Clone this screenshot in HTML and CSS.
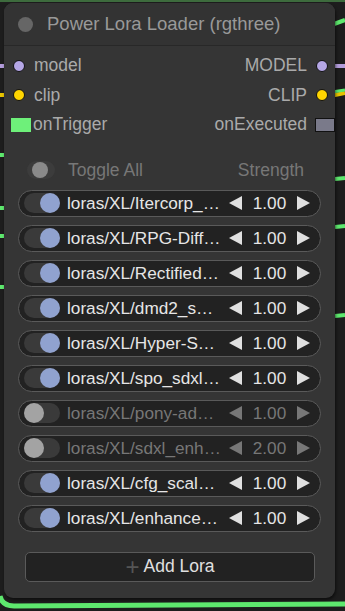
FILE: index.html
```html
<!DOCTYPE html>
<html lang="en">
<head>
  <meta charset="UTF-8" />
  <title>Power Lora Loader</title>
  <link rel="stylesheet" href="styles.css">
</head>
<body>
  <div id="canvas">
    <svg class="wires" width="345" height="611" viewBox="0 0 345 611">
      <path d="M0 1 L345 1" stroke="#3d6b3d" stroke-width="2" fill="none"/>
      <path d="M0 66 L10 66" stroke="#b39ddb" stroke-width="4"/>
      <path d="M330 66 L345 66" stroke="#b39ddb" stroke-width="4"/>
      <path d="M0 95 L10 95" stroke="#e8c400" stroke-width="4"/>
      <path d="M330 96 L345 93" stroke="#e8c400" stroke-width="4"/>
      <path d="M332 92 L345 90" stroke="#5ee86e" stroke-width="3"/>
      <path d="M334 24 L345 20" stroke="#5ee86e" stroke-width="4"/>
      <path d="M0 155 L4 155 M0 208 L4 208 M0 236 L4 236 M0 287 L4 287" stroke="#5ee86e" stroke-width="4"/>
      <path d="M335 179 L345 178 M335 227 L345 226 M335 316 L345 315" stroke="#5ee86e" stroke-width="4"/>
      <path d="M0 596 Q2 606 14 606 L345 604" stroke="#5ee86e" stroke-width="5" fill="none"/>
    </svg>

    <div class="node">
      <div class="node-title">
        <span class="title-dot"></span>
        <span>Power Lora Loader (rgthree)</span>
      </div>

      <div class="slots">
        <div class="slot">
          <span class="in"><i class="dot lav"></i>model</span>
          <span class="out">MODEL<i class="dot lav"></i></span>
        </div>
        <div class="slot">
          <span class="in"><i class="dot yel"></i>clip</span>
          <span class="out">CLIP<i class="dot yel"></i></span>
        </div>
        <div class="slot">
          <span class="in"><i class="box green"></i>onTrigger</span>
          <span class="out">onExecuted<i class="box gray"></i></span>
        </div>
      </div>

      <div class="header-row">
        <span class="tgl-all"><i></i></span>
        <span class="lbl">Toggle All</span>
        <span class="str">Strength</span>
      </div>

      <div class="loras">
        <div class="lora"><span class="tgl on"><i></i></span><span class="name">loras/XL/Itercorp_…</span><span class="arr l"></span><span class="val">1.00</span><span class="arr r"></span></div>
        <div class="lora"><span class="tgl on"><i></i></span><span class="name">loras/XL/RPG-Diff…</span><span class="arr l"></span><span class="val">1.00</span><span class="arr r"></span></div>
        <div class="lora"><span class="tgl on"><i></i></span><span class="name">loras/XL/Rectified…</span><span class="arr l"></span><span class="val">1.00</span><span class="arr r"></span></div>
        <div class="lora"><span class="tgl on"><i></i></span><span class="name">loras/XL/dmd2_s…</span><span class="arr l"></span><span class="val">1.00</span><span class="arr r"></span></div>
        <div class="lora"><span class="tgl on"><i></i></span><span class="name">loras/XL/Hyper-S…</span><span class="arr l"></span><span class="val">1.00</span><span class="arr r"></span></div>
        <div class="lora"><span class="tgl on"><i></i></span><span class="name">loras/XL/spo_sdxl…</span><span class="arr l"></span><span class="val">1.00</span><span class="arr r"></span></div>
        <div class="lora off"><span class="tgl"><i></i></span><span class="name">loras/XL/pony-ad…</span><span class="arr l"></span><span class="val">1.00</span><span class="arr r"></span></div>
        <div class="lora off"><span class="tgl"><i></i></span><span class="name">loras/XL/sdxl_enh…</span><span class="arr l"></span><span class="val">2.00</span><span class="arr r"></span></div>
        <div class="lora"><span class="tgl on"><i></i></span><span class="name">loras/XL/cfg_scal…</span><span class="arr l"></span><span class="val">1.00</span><span class="arr r"></span></div>
        <div class="lora"><span class="tgl on"><i></i></span><span class="name">loras/XL/enhance…</span><span class="arr l"></span><span class="val">1.00</span><span class="arr r"></span></div>
      </div>

      <div class="add-lora"><span class="plus">+</span>Add Lora</div>
    </div>
  </div>
</body>
</html>
```
FILE: styles.css
```css
* {
  box-sizing: border-box;
}
html, body {
  margin: 0;
  padding: 0;
  background: #1d1d1d;
  font-family: "Liberation Sans", Arial, sans-serif;
}

#canvas {
  position: relative;
  width: 345px;
  height: 611px;
  overflow: hidden;
  background: #1d1d1d;
}

.wires {
  position: absolute;
  top: 0; left: 0;
}

.node {
  position: absolute;
  left: 4px;
  top: 3px;
  width: 331px;
  height: 595px;
  background: #353535;
  border-radius: 9px;
  box-shadow: 1px 2px 3px rgba(0,0,0,0.5);
  display: flex;
  flex-direction: column;
}

.node-title {
  height: 43px;
  display: flex;
  align-items: center;
  gap: 14px;
  padding-left: 14px;
  color: #999;
  font-size: 18.5px;
  border-bottom: 1px solid #282828;
  background: #333;
  border-radius: 9px 9px 0 0;
}
.title-dot {
  width: 15px;
  height: 15px;
  border-radius: 50%;
  background: #666;
}

.slots {
  padding-top: 5px;
}
.slot {
  height: 29.5px;
  display: flex;
  justify-content: space-between;
  align-items: center;
  font-size: 17.5px;
  color: #aaa;
}
.slot .in, .slot .out {
  display: flex;
  align-items: center;
}
.slot .in .dot { margin: 0 9px 0 9px; }
.slot .out .dot { margin: 0 7px 0 9px; }
.dot {
  width: 12px;
  height: 12px;
  border-radius: 50%;
  border: 1px solid #111;
}
.dot.lav { background: #b5a7e6; }
.dot.yel { background: #ffd500; }
.box {
  width: 20px;
  height: 14px;
}
.box.green {
  background: #6ef07a;
  margin: 0 2px 0 7px;
}
.box.gray {
  background: #7a7a8a;
  border: 1px solid #111;
  margin: 0 0 0 8px;
}

.header-row {
  margin-top: 17px;
  height: 27px;
  display: flex;
  align-items: center;
  padding: 0 31px 0 23px;
  color: #777;
  font-size: 17.5px;
}
.tgl-all {
  width: 28px;
  height: 18px;
  border-radius: 9px;
  background: #3c3c3c;
  position: relative;
  margin-right: 13px;
}
.tgl-all i {
  position: absolute;
  left: 5px;
  top: 1px;
  width: 16px;
  height: 16px;
  border-radius: 50%;
  background: #8a8a8a;
}
.header-row .str {
  margin-left: auto;
}

.loras {
  display: flex;
  flex-direction: column;
  gap: 8px;
  margin-top: 6px;
  padding: 0 14px;
}
.lora {
  height: 27px;
  border-radius: 14px;
  border: 1px solid #5a5a5a;
  background: #222;
  display: flex;
  align-items: center;
  padding-left: 5px;
  color: #e6e6e6;
  font-size: 17.2px;
}
.tgl {
  width: 36px;
  height: 20px;
  border-radius: 10px;
  background: #3a3a3a;
  position: relative;
  margin-right: 7px;
  flex-shrink: 0;
}
.tgl i {
  position: absolute;
  top: 0;
  width: 20px;
  height: 20px;
  border-radius: 50%;
}
.tgl.on i {
  right: 0;
  background: #90a2cf;
}
.lora.off .tgl i {
  left: 0;
  background: #a3a3a3;
}
.name {
  width: 162px;
  flex-shrink: 0;
  white-space: nowrap;
  overflow: hidden;
}
.arr {
  width: 0;
  height: 0;
  flex-shrink: 0;
  border-top: 7px solid transparent;
  border-bottom: 7px solid transparent;
}
.arr.l {
  border-right: 13px solid #e0e0e0;
}
.arr.r {
  border-left: 13px solid #e0e0e0;
}
.val {
  width: 55px;
  text-align: center;
}
.lora.off {
  color: #777;
}
.lora.off .arr.l { border-right-color: #777; }
.lora.off .arr.r { border-left-color: #777; }

.add-lora {
  margin: 20px 20px 0 21px;
  height: 30px;
  border: 1px solid #5a5a5a;
  border-radius: 5px;
  background: #222;
  color: #e0e0e0;
  font-size: 17.5px;
  display: flex;
  align-items: center;
  justify-content: center;
}
.plus {
  color: #555;
  font-size: 24px;
  margin-right: 4px;
}
```
